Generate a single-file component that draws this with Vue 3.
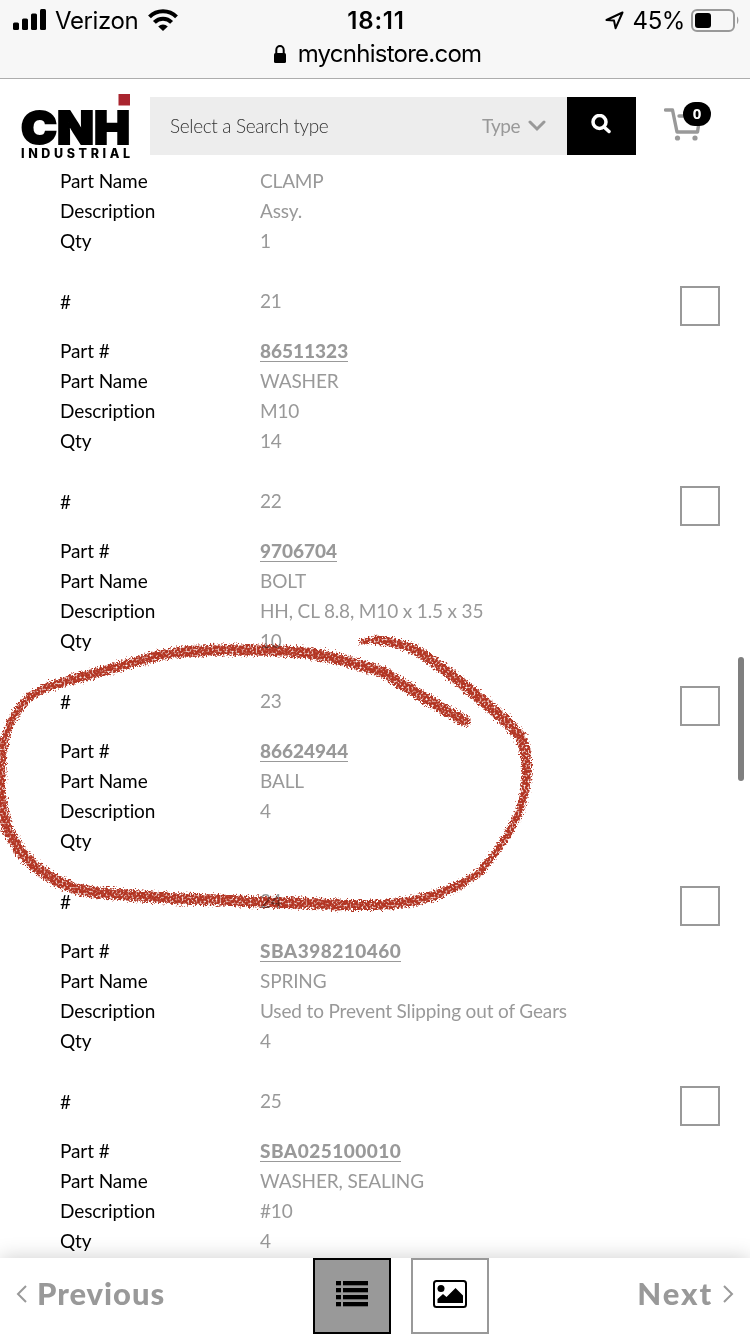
<template>
  <div class="screen">
    <div class="browser-bar">
      <div class="status">
        <div class="status-left">
          <svg class="signal" width="34" height="22" viewBox="0 0 34 22">
            <rect x="0" y="13.5" width="6" height="7.5" rx="1.5" />
            <rect x="9" y="9.5" width="6" height="11.5" rx="1.5" />
            <rect x="18" y="4.5" width="6" height="16.5" rx="1.5" />
            <rect x="27" y="0" width="6" height="21" rx="1.5" />
          </svg>
          <span class="carrier">Verizon</span>
          <svg class="wifi" width="30" height="22" viewBox="0 0 30 22">
            <path d="M1.5 7.8A19 19 0 0 1 28.5 7.8" />
            <path d="M6.4 13.4A12 12 0 0 1 23.6 13.4" />
            <path class="dot" d="M10.2 17.4a7 7 0 0 1 9.6 0L15 22z" />
          </svg>
        </div>
        <div class="clock">18:11</div>
        <div class="status-right">
          <svg class="location" width="19" height="19" viewBox="0 0 19 19">
            <path d="M17.5 1.5L1.5 9L9 9.6L10.6 17.2Z" />
          </svg>
          <span class="percent">45%</span>
          <svg class="battery" width="48" height="23" viewBox="0 0 48 23">
            <rect class="case" x="1" y="1" width="42" height="21" rx="5" />
            <rect x="4" y="4" width="16" height="15" rx="3" />
            <path class="tip" d="M46 7.500c1.800 1 1.800 6.500 0 7.500z" />
          </svg>
        </div>
      </div>
      <div class="address">
        <svg width="12" height="18" viewBox="0 0 12 18">
          <rect x="0" y="8" width="12" height="10" rx="1.500" />
          <path d="M2.300 8.500V5a3.700 3.900 0 0 1 7.400 0V8.500" />
        </svg>
        <span>mycnhistore.com</span>
      </div>
    </div>

    <header class="top">
      <svg class="logo" width="112" height="66" viewBox="0 0 112 66">
        <text class="logo-name" x="1" y="49.500" textLength="109" lengthAdjust="spacingAndGlyphs">CNH</text>
        <rect class="logo-dot" x="98.500" y="0" width="11.500" height="11.500" />
        <text class="logo-sub" x="1" y="64" textLength="109">INDUSTRIAL</text>
      </svg>
      <div class="search">
        <div class="search-input">Select a Search type</div>
        <div class="search-type">
          <span>Type</span>
          <svg width="18" height="12" viewBox="0 0 18 12">
            <path d="M2 2L9 9L16 2" />
          </svg>
        </div>
        <button class="search-button">
          <svg width="20" height="20" viewBox="0 0 20 20">
            <circle cx="8.500" cy="8" r="6.500" />
            <path d="M13 13L18 17.500" />
          </svg>
        </button>
      </div>
      <div class="cart">
        <svg width="38" height="34" viewBox="0 0 38 34">
          <path d="M1.500 2H8.500L13 24H33.500L36 8H15" />
          <circle cx="13.500" cy="30" r="2.600" />
          <circle cx="31" cy="30" r="2.600" />
        </svg>
        <span class="badge">0</span>
      </div>
    </header>

    <main class="list">
      <section v-for="(part, i) in parts" :key="i" class="part">
        <div v-if="part.no" class="row head">
          <span class="label">#</span>
          <span class="value">{{ part.no }}</span>
          <span class="check"></span>
        </div>
        <div v-for="field in part.fields" :key="field[0]" class="row">
          <span class="label">{{ field[0] }}</span>
          <a v-if="field[0] === 'Part #'" class="link" :class="{ sba: field[1].startsWith('SBA') }">{{ field[1] }}</a>
          <span v-else class="value">{{ field[1] }}</span>
        </div>
      </section>
    </main>

    <footer class="pager">
      <div class="page-link prev">
        <svg width="12" height="18" viewBox="0 0 12 18"><path d="M10 1L2 9L10 17" /></svg>
        <span>Previous</span>
      </div>
      <div class="views">
        <div class="view active">
          <svg width="32" height="26" viewBox="0 0 32 26">
            <template v-for="n in 4" :key="n">
              <rect x="0" :y="(n - 1) * 7" width="5" height="4.300" />
              <rect x="7" :y="(n - 1) * 7" width="25" height="4.300" />
            </template>
          </svg>
        </div>
        <div class="view">
          <svg width="34" height="28" viewBox="0 0 34 28">
            <rect class="frame" x="1" y="1" width="32" height="26" rx="2.500" />
            <circle cx="8" cy="8.500" r="3.500" />
            <path d="M4.500 23V19L10 14L13.500 17L22.500 8L30 15.500V23Z" />
          </svg>
        </div>
      </div>
      <div class="page-link next">
        <span>Next</span>
        <svg width="12" height="18" viewBox="0 0 12 18"><path d="M2 1L10 9L2 17" /></svg>
      </div>
    </footer>

    <svg class="marker" width="750" height="1334" viewBox="0 0 750 1334">
      <defs>
        <filter
          id="crayon"
          filterUnits="userSpaceOnUse"
          color-interpolation-filters="sRGB"
          x="-20"
          y="600"
          width="600"
          height="340"
        >
          <feTurbulence type="fractalNoise" baseFrequency="0.6" numOctaves="2" seed="4" result="noise" />
          <feDisplacementMap in="SourceAlpha" in2="noise" scale="9" xChannelSelector="R" yChannelSelector="G" result="rough" />
          <feTurbulence type="fractalNoise" baseFrequency="0.5" numOctaves="2" seed="9" result="grain" />
          <feColorMatrix in="grain" type="matrix" values="0 0 0 0 0  0 0 0 0 0  0 0 0 0 0  3 0 0 0 -0.55" result="mask" />
          <feFlood flood-color="#b23422" />
          <feComposite in2="rough" operator="in" />
          <feComposite in2="mask" operator="in" />
          <feGaussianBlur stdDeviation="0.35" />
        </filter>
      </defs>
      <g filter="url(#crayon)">
        <line
          v-for="(s, i) in strokes"
          :key="i"
          :x1="s.x1"
          :y1="s.y1"
          :x2="s.x2"
          :y2="s.y2"
          :stroke-width="s.w"
        />
      </g>
    </svg>
    <div class="scrollbar"></div>
  </div>
</template>

<script setup>
import { computed } from 'vue'

const record = (no, id, name, description, qty) => ({
  no,
  fields: [
    ['Part #', id],
    ['Part Name', name],
    ['Description', description],
    ['Qty', qty],
  ],
})

const parts = [
  {
    fields: [
      ['Part Name', 'CLAMP'],
      ['Description', 'Assy.'],
      ['Qty', '1'],
    ],
  },
  record('21', '86511323', 'WASHER', 'M10', '14'),
  record('22', '9706704', 'BOLT', 'HH, CL 8.8, M10 x 1.5 x 35', '10'),
  record('23', '86624944', 'BALL', '4', ''),
  record('24', 'SBA398210460', 'SPRING', 'Used to Prevent Slipping out of Gears', '4'),
  record('25', 'SBA025100010', 'WASHER, SEALING', '#10', '4'),
]

// x, y and thickness along the hand-drawn loop
const loop = [
  [465, 720, 8], [443, 708, 9], [420, 694, 9], [400, 682, 9], [385, 672, 9],
  [360, 664, 9], [335, 657, 9], [300, 651, 9], [260, 649, 9], [220, 649, 9],
  [180, 651, 9], [160, 654, 8], [135, 661, 8], [100, 671, 8], [70, 679, 8],
  [45, 687, 7], [30, 695, 6], [20, 706, 6], [10, 722, 6], [4, 740, 6],
  [1, 760, 7], [0, 785, 8], [3, 812, 8], [8, 830, 9], [20, 850, 9],
  [35, 866, 9], [55, 879, 9], [75, 888, 9], [100, 892, 9], [140, 895, 9],
  [180, 898, 9], [220, 899, 9], [260, 901, 9], [300, 902, 9], [340, 904, 9],
  [380, 904, 8], [410, 901, 8], [435, 894, 8], [460, 884, 7], [480, 871, 6],
  [495, 852, 5], [508, 833, 5], [519, 812, 6], [525, 790, 6], [527, 770, 7],
  [525, 750, 8], [520, 735, 9], [505, 719, 9], [490, 706, 9], [470, 689, 9],
  [445, 669, 9], [425, 655, 8], [410, 646, 8], [390, 641, 7], [375, 639, 7],
  [362, 641, 4],
]

const strokes = computed(() =>
  loop.slice(1).map(([x, y, w], i) => ({
    x1: loop[i][0],
    y1: loop[i][1],
    x2: x,
    y2: y,
    w: w + 2,
  }))
)
</script>

<style>
body {
  margin: 0;
  background: #fff;
}
</style>

<style scoped>
.screen {
  position: relative;
  display: flex;
  flex-direction: column;
  width: 750px;
  height: 1334px;
  overflow: hidden;
  background: #fff;
  font-family: Lato, sans-serif;
  font-variant-ligatures: none;
}
.browser-bar {
  box-sizing: border-box;
  flex: none;
  height: 79px;
  background: #f7f7f7;
  border-bottom: 1px solid #adadad;
  color: #000;
  font-family: Inter, sans-serif;
}
.status {
  display: grid;
  grid-template-columns: 1fr auto 1fr;
  align-items: center;
  height: 41px;
  padding: 0 11px 0 13px;
  font-size: 24px;
}
.status-left,
.status-right {
  display: flex;
  align-items: center;
}
.status-right {
  justify-content: flex-end;
}
.status-left svg,
.status-right svg {
  margin-top: -1px;
}
.carrier {
  margin: 0 10px 0 8px;
  letter-spacing: -0.4px;
}
.wifi path {
  fill: none;
  stroke: #000;
  stroke-width: 4;
}
.wifi .dot {
  fill: #000;
  stroke: none;
}
.clock {
  font-weight: 600;
  letter-spacing: 0.8px;
}
.location path {
  fill: none;
  stroke: #000;
  stroke-width: 2;
  stroke-linejoin: round;
}
.percent {
  margin: 0 6px 0 9px;
  letter-spacing: -0.4px;
}
.battery .case {
  fill: none;
  stroke: #999;
  stroke-width: 2;
}
.battery .tip {
  fill: #999;
}
.address {
  display: flex;
  align-items: center;
  justify-content: center;
  gap: 12px;
  height: 25px;
  padding-left: 5px;
  font-size: 24px;
  letter-spacing: -0.75px;
}
.address path {
  fill: none;
  stroke: #000;
  stroke-width: 2;
}
.top {
  display: flex;
  align-items: flex-start;
  flex: none;
  box-sizing: border-box;
  height: 88px;
  padding: 15px 0 0 20px;
}
.logo {
  flex: none;
}
.logo-name {
  font: 900 46px Inter, sans-serif;
  stroke: #000;
  stroke-width: 2;
}
.logo-dot {
  fill: #a9252f;
}
.logo-sub {
  font: 800 12.5px Inter, sans-serif;
}
.search {
  display: flex;
  width: 486px;
  height: 58px;
  margin: 3px 0 0 18px;
  background: #ededed;
  font-size: 19px;
  line-height: 58px;
}
.search-input {
  width: 292px;
  padding-left: 20px;
  color: #333;
  font-weight: 300;
  letter-spacing: -0.35px;
}
.search-type {
  display: flex;
  align-items: center;
  gap: 8px;
  width: 85px;
  padding-left: 20px;
  color: #999;
  letter-spacing: -0.5px;
}
.search-type path {
  fill: none;
  stroke: #999;
  stroke-width: 3;
  stroke-linecap: round;
}
.search-button {
  width: 69px;
  padding: 0 2px 2px 0;
  border: 0;
  background: #000;
}
.search-button svg {
  fill: none;
  stroke: #fff;
  stroke-width: 3.5;
  stroke-linecap: round;
}
.cart {
  position: relative;
  margin: 14px 0 0 28px;
}
.cart path {
  fill: none;
  stroke: #999;
  stroke-width: 3.4;
  stroke-linecap: round;
  stroke-linejoin: round;
}
.cart circle {
  fill: #999;
}
.badge {
  position: absolute;
  top: -6px;
  left: 19px;
  width: 28px;
  height: 24px;
  border-radius: 12px;
  background: #000;
  color: #fff;
  font: bold 15px/22px "Noto Sans", sans-serif;
  text-align: center;
}
.list {
  flex: 1;
  min-height: 0;
  overflow: hidden;
  font-size: 19px;
  line-height: 28px;
}
.part {
  padding: 0 30px 30px 60px;
}
.row {
  display: flex;
  align-items: flex-start;
  height: 30px;
}
.head {
  margin-bottom: 20px;
}
.label {
  width: 200px;
  color: #000;
  letter-spacing: -0.1px;
}
.head .label {
  line-height: 30px;
}
.value,
.link {
  color: #999;
  white-space: nowrap;
}
.value {
  letter-spacing: -0.15px;
}
.link {
  height: 24px;
  border-bottom: 1px solid #999;
  font-weight: 900;
}
.sba {
  letter-spacing: 0.48px;
}
.check {
  box-sizing: border-box;
  width: 40px;
  height: 40px;
  margin: -1px 0 0 auto;
  border: 2px solid #999;
}
.pager {
  display: flex;
  justify-content: space-between;
  flex: none;
  height: 76px;
  padding: 0 16px;
  background: #fff;
  box-shadow: 0 0 20px rgba(0, 0, 0, 0.2);
  color: #999;
}
.page-link {
  display: flex;
  align-items: center;
  width: 160px;
  height: 71px;
  gap: 9px;
  font-size: 31px;
  font-weight: 900;
  letter-spacing: 0.95px;
}
.page-link span {
  margin-top: -2px;
}
.next {
  justify-content: flex-end;
  letter-spacing: 1.9px;
}
.page-link path {
  fill: none;
  stroke: #999;
  stroke-width: 2;
}
.views {
  display: flex;
  gap: 20px;
  padding-left: 52px;
}
.view {
  display: flex;
  align-items: center;
  justify-content: center;
  box-sizing: border-box;
  width: 78px;
  height: 76px;
  padding-bottom: 4px;
  border: 2px solid #999;
}
.active {
  border-color: #000;
  background: #999;
}
.frame {
  fill: none;
  stroke: #000;
  stroke-width: 2;
}
.marker {
  position: absolute;
  top: 1px;
  left: 0;
  mix-blend-mode: multiply;
  pointer-events: none;
}
.marker line {
  stroke: #b23422;
  stroke-linecap: round;
}
.scrollbar {
  position: absolute;
  top: 657px;
  right: 6px;
  width: 6px;
  height: 124px;
  border-radius: 3px;
  background: #7f7f7f;
}
</style>
